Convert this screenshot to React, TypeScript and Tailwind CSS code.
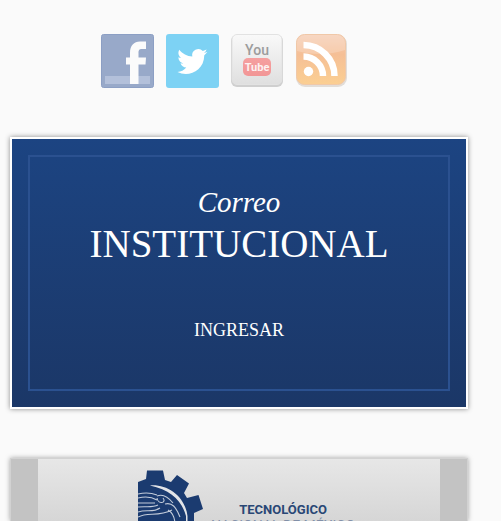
const social = "block h-[54px] w-[53px]";

function Facebook() {
  return (
    <svg viewBox="0 0 53 54" className={social} aria-hidden="true">
      <rect x="0.5" y="0.5" width="52" height="53" rx="2" fill="#98a9c9" stroke="#8c9fc4" />
      <rect x="4" y="42" width="45" height="8" fill="#b3c0da" />
      <path d="M29 50V30.500H25V23.500H29V19C29 11.500 33 7.500 39 7.500H45V15H41C38 15 37.500 16.500 37.500 19V23.500H45L44.500 30.500H37.500V50Z" fill="#fbfbfb" />
    </svg>
  );
}

function Twitter() {
  return (
    <svg viewBox="0 0 53 54" className={social} aria-hidden="true">
      <rect width="53" height="54" rx="3" fill="#7dd2f4" />
      <path d="M41.500 17.800a13 13 0 0 1-3.500 1 6 6 0 0 0 2.600-3.300 12 12 0 0 1-3.800 1.400A6.200 6.200 0 0 0 26.300 22.500C21 22.300 16.500 19.800 13.300 15.800c-1.700 3-.8 6.400 1.900 8.200-1 0-2-.3-2.800-.8 0 3 2.100 5.500 4.900 6-.9.300-1.900.3-2.800.1.800 2.500 3.100 4.200 5.800 4.300A12.500 12.500 0 0 1 11.500 38C22 43.500 38 37.500 38.300 21.200a12 12 0 0 0 3.200-3.400Z" fill="#fff" />
    </svg>
  );
}

function YouTube() {
  return (
    <svg viewBox="0 0 53 54" className={social} aria-hidden="true">
      <defs>
        <linearGradient id="key" x1="0" y1="0" x2="0" y2="1">
          <stop offset="0" stopColor="#f9f9f9" />
          <stop offset="1" stopColor="#dfdfdf" />
        </linearGradient>
        <linearGradient id="tube" x1="0" y1="0" x2="0" y2="1">
          <stop offset="0" stopColor="#f5a0a0" />
          <stop offset="1" stopColor="#f29696" />
        </linearGradient>
      </defs>
      <rect x="0" y="1" width="52" height="52" rx="6" fill="#cfcfcf" />
      <rect x="1" y="0.5" width="50" height="50" rx="5" fill="url(#key)" stroke="#e2e2e2" />
      <text x="26" y="21" textAnchor="middle" fontSize="14" fontWeight="500" fill="#9c9c9c" fontFamily="Roboto, sans-serif">You</text>
      <rect x="12" y="24" width="28" height="18" rx="5" fill="url(#tube)" />
      <text x="26" y="37" textAnchor="middle" fontSize="11" fontWeight="700" fill="#fdf2f2" fontFamily="Roboto, sans-serif">Tube</text>
    </svg>
  );
}

function Rss() {
  return (
    <svg viewBox="0 0 53 54" className={social} aria-hidden="true">
      <defs>
        <linearGradient id="feed" x1="0" y1="0" x2="0" y2="1">
          <stop offset="0" stopColor="#f5cdb4" />
          <stop offset="0.400" stopColor="#f5bf96" />
          <stop offset="1" stopColor="#fbcf92" />
        </linearGradient>
      </defs>
      <rect x="0" y="1" width="51" height="52" rx="9" fill="#e2ddd8" />
      <rect x="0.5" y="0.5" width="49" height="50" rx="8" fill="url(#feed)" stroke="#f0c8a8" />
      <path d="M1 17V9a8 8 0 0 1 8-8H41a8 8 0 0 1 8 8V16C34 21 16 21 1 17Z" fill="#fff" opacity="0.200" />
      <circle cx="12.500" cy="37.500" r="4.700" fill="#fff" />
      <path d="M7.500 22.500A19.500 19.500 0 0 1 27 42M7.500 11A31 31 0 0 1 38.500 42" fill="none" stroke="#fff" strokeWidth="6.500" />
    </svg>
  );
}

function Gear() {
  return (
    <svg viewBox="0 0 66 66" className="h-[66px] w-[66px] shrink-0" aria-hidden="true">
      <path d="M0 12L8 9L9 0.500H25L27 10L33 12L39 5L51 13.500L46 23L49 28L60.500 25L65 39L56 43V66H0Z" fill="#1b3b70" />
      <path d="M12 15.500C29 14 47 26 49.500 46V66H48V46C44 31 33 20 12 15.500Z" fill="#e2e4e8" />
      <path d="M0 24C8 22 14 23 19 25M0 28C8 26 14 27 19 30M0 33H17M0 37C8 36 14 38 20 35M0 42C8 39 15 43 22 38M0 47C10 42 20 47 34 40M19 26C26 23 31 28 35 33M19 28C20 35 29 33 25 28M27 34C34 32 38 37 42 47M30 40C35 43 37 47 37 55" fill="none" stroke="#c3ccda" strokeWidth="1.100" />
    </svg>
  );
}

const links = [
  { name: "Facebook", icon: <Facebook /> },
  { name: "Twitter", icon: <Twitter /> },
  { name: "YouTube", icon: <YouTube /> },
  { name: "RSS", icon: <Rss /> },
];

export default function App() {
  return (
    <main className="flex h-screen flex-col overflow-hidden bg-[#fafafa] pt-[34px] pr-[33px] pl-[10px]">
      <nav className="flex justify-center gap-3 pr-7" aria-label="Redes sociales">
        {links.map((link) => (
          <a key={link.name} href="#" aria-label={link.name}>
            {link.icon}
          </a>
        ))}
      </nav>

      <section className="mt-[49px] border-2 border-white bg-linear-to-b from-[#1c4482] to-[#1b3767] p-4 font-['Liberation_Serif',serif] text-white shadow-[0_0_5px_rgba(0,0,0,0.45)]">
        <div className="flex flex-col items-center border-2 border-[#2b5190] pt-[27px] pb-[45px]">
          <h2 className="flex flex-col items-center">
            <em className="text-[29px] leading-[36px]">Correo</em>
            <span className="text-[39px] leading-[48px]">INSTITUCIONAL</span>
          </h2>
          <a href="#" className="mt-12 text-[18px] leading-[28px]">
            INGRESAR
          </a>
        </div>
      </section>

      <section className="mt-[49px] flex min-h-0 flex-1 border-x border-t border-[#d2d2d2] bg-[#c3c3c3] px-[27px] shadow-[0_0_5px_rgba(0,0,0,0.35)]">
        <div className="flex flex-1 items-start bg-linear-to-b from-[#e7e7e7] to-[#d6d6d6] pt-[11px] pl-[100px]">
          <Gear />
          <div className="flex flex-col items-center whitespace-nowrap pt-8 pl-[7px] font-[Roboto,sans-serif] text-[#294775]">
            <strong className="text-[13px] leading-[16px]">TECNOLÓGICO</strong>
            <span className="text-[14px] leading-[16px] text-[#8290a8]">NACIONAL DE MÉXICO</span>
          </div>
        </div>
      </section>
    </main>
  );
}
